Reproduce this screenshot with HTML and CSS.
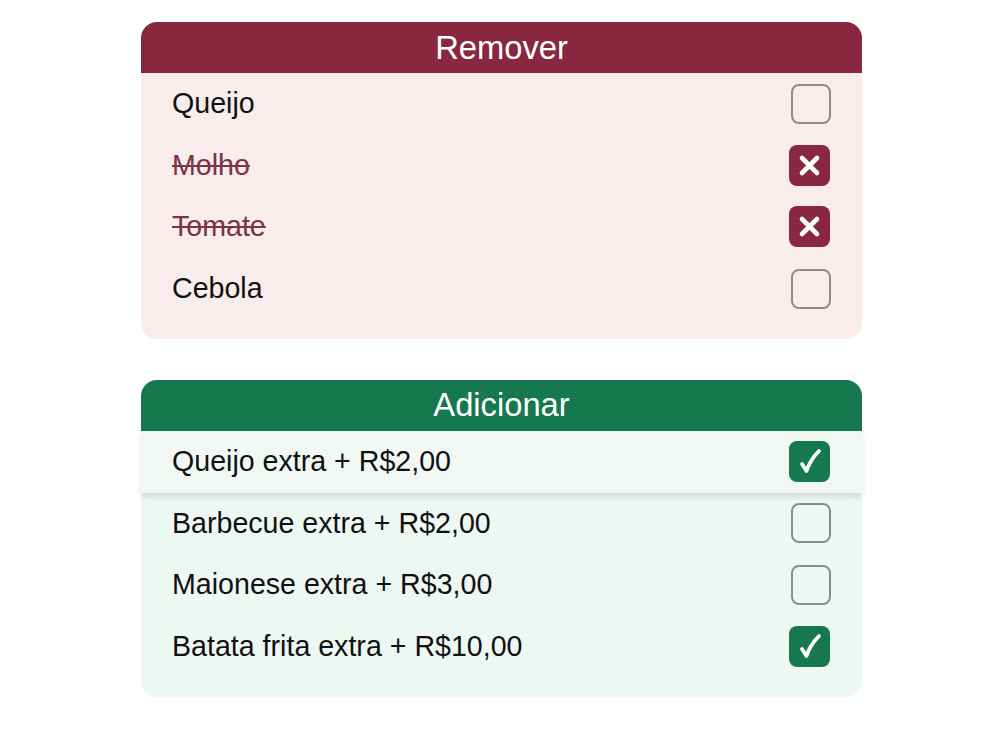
FILE: index.html
```html
<!DOCTYPE html>
<html lang="pt-BR">
<head>
<meta charset="utf-8">
<title>Personalizar</title>
<link rel="stylesheet" href="styles.css">
</head>
<body>
<main class="page">
  <section class="card card-remove">
    <h2 class="card-title">Remover</h2>
    <ul class="list">
      <li class="row"><span class="label">Queijo</span><span class="box"></span></li>
      <li class="row removed"><span class="label">Molho</span><span class="box box-x"><svg viewBox="0 0 41 41" width="41" height="41"><path d="M13 13 L28 28 M28 13 L13 28" stroke="#fff" stroke-width="4.6" stroke-linecap="round" fill="none"/></svg></span></li>
      <li class="row removed"><span class="label">Tomate</span><span class="box box-x"><svg viewBox="0 0 41 41" width="41" height="41"><path d="M13 13 L28 28 M28 13 L13 28" stroke="#fff" stroke-width="4.6" stroke-linecap="round" fill="none"/></svg></span></li>
      <li class="row"><span class="label">Cebola</span><span class="box"></span></li>
    </ul>
  </section>

  <section class="card card-add">
    <h2 class="card-title">Adicionar</h2>
    <ul class="list">
      <li class="row hover"><span class="label">Queijo extra + R$2,00</span><span class="box box-check"><svg viewBox="0 0 41 41" width="41" height="41"><path d="M13 23 L17.5 30 Q21 19 30 10" stroke="#fff" stroke-width="3.8" stroke-linecap="round" stroke-linejoin="round" fill="none"/></svg></span></li>
      <li class="row"><span class="label">Barbecue extra + R$2,00</span><span class="box"></span></li>
      <li class="row"><span class="label">Maionese extra + R$3,00</span><span class="box"></span></li>
      <li class="row"><span class="label">Batata frita extra + R$10,00</span><span class="box box-check"><svg viewBox="0 0 41 41" width="41" height="41"><path d="M13 23 L17.5 30 Q21 19 30 10" stroke="#fff" stroke-width="3.8" stroke-linecap="round" stroke-linejoin="round" fill="none"/></svg></span></li>
    </ul>
  </section>
</main>
</body>
</html>
```
FILE: styles.css
```css
* { box-sizing: border-box; }
html, body { margin: 0; padding: 0; background: #fff; }
body { font-family: Arial, "Liberation Sans", sans-serif; color: #111; }

.page {
  width: 721px;
  margin: 22px 0 0 141px;
  display: flex;
  flex-direction: column;
  gap: 41px;
}

.card {
  border-radius: 16px;
  padding-bottom: 19.6px;
}
.card-remove { background: #f9ecec; }
.card-add { background: #eef8f3; }

.card-title {
  margin: 0;
  height: 51px;
  display: flex;
  align-items: center;
  justify-content: center;
  color: #fff;
  font-weight: normal;
  font-size: 32.7px;
  border-radius: 16px 16px 0 0;
}
.card-remove .card-title { background: #88273f; }
.card-add .card-title { background: #15784f; }

.list { list-style: none; margin: 0; padding: 0; }

.row {
  height: 61.6px;
  display: flex;
  align-items: center;
  justify-content: space-between;
  padding: 0 31px;
  font-size: 28.6px;
}
.row.hover {
  background: #f1f8f4;
  box-shadow: 0 4px 6px rgba(0, 0, 0, 0.12);
  position: relative;
}

.removed .label {
  color: #7b3348;
  text-decoration: line-through;
  text-decoration-color: #7b3348;
}

.box {
  width: 40px;
  height: 40px;
  border: 2px solid #8c8c8c;
  border-radius: 8px;
  position: relative;
}
.box svg { position: absolute; left: 0; top: 0; }
.box-x,
.box-check {
  border: none;
  width: 41px;
  height: 41px;
  margin-right: 1px;
}
.box-x { background: #88273f; }
.box-check { background: #15784f; }
```
